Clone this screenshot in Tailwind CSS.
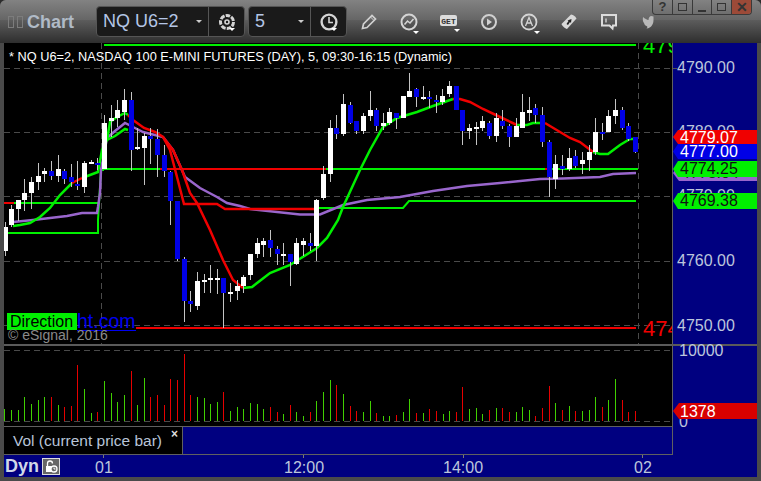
<!DOCTYPE html>
<html>
<head>
<meta charset="utf-8">
<script src="https://cdn.jsdelivr.net/npm/@tailwindcss/browser@4"></script>
</head>
<body class="m-0 bg-[#2c2c2c]">
<div class="w-[761px] h-[481px] flex flex-col overflow-hidden bg-[#4a4a4a] rounded-t-[6px] font-[Liberation_Sans,Arial,sans-serif]">

  <!-- toolbar -->
  <header class="relative h-[43px] shrink-0 flex items-center bg-[linear-gradient(180deg,#828282_0%,#666666_46%,#5c5c5c_47%,#2e2e2e_100%)]">
    <div class="flex gap-[3px] ml-[8px] w-[16px]">
      <span class="w-[6px] h-[12px] border border-[#7c7c7c] shrink-0"></span>
      <span class="w-[6px] h-[12px] border border-[#7c7c7c] shrink-0"></span>
    </div>
    <span class="ml-[3px] w-[69px] text-[18px] font-bold text-[#b0bac6] leading-none">Chart</span>

    <div class="w-[149px] h-[31px] flex rounded-[4px] border border-[#555] bg-[#1a1a1a]">
      <div class="w-[112px] flex items-center pl-[6px] border-r border-[#555] text-[18px] text-[#b4c6e6] relative">NQ U6=2<span class="absolute right-[6px] top-[13px] w-0 h-0 border-x-[3px] border-x-transparent border-t-[3px] border-t-[#ccc]"></span></div>
      <div class="flex-1 flex items-center justify-center relative">
        <svg width="20" height="20" viewBox="0 0 20 20" fill="none" stroke="#d4d4d4" stroke-width="3"><circle cx="10" cy="10" r="6.500" stroke-dasharray="4.500 1.200"/><circle cx="10" cy="10" r="2" stroke-width="1.600"/></svg>
        <span class="absolute left-[20px] bottom-[5px] w-0 h-0 border-x-[3px] border-x-transparent border-t-[3px] border-t-white"></span>
      </div>
    </div>
    <div class="ml-[3px] w-[99px] h-[31px] flex rounded-[4px] border border-[#555] bg-[#1a1a1a]">
      <div class="w-[62px] flex items-center pl-[6px] border-r border-[#555] text-[18px] text-[#b4c6e6] relative">5<span class="absolute right-[6px] top-[13px] w-0 h-0 border-x-[3px] border-x-transparent border-t-[3px] border-t-[#ccc]"></span></div>
      <div class="flex-1 flex items-center justify-center relative">
        <svg width="20" height="20" viewBox="0 0 20 20" fill="none" stroke="#d4d4d4" stroke-width="2.400"><circle cx="10" cy="10" r="7.400"/><path d="M10 5v5.500h4" stroke-width="1.600"/></svg>
        <span class="absolute left-[20px] bottom-[5px] w-0 h-0 border-x-[3px] border-x-transparent border-t-[3px] border-t-white"></span>
      </div>
    </div>

    <div class="ml-[2px] flex items-center">
      <div class="w-[40px] flex justify-center"><svg width="18" height="18" viewBox="0 0 18 18" fill="none" stroke="#d0d0d0" stroke-width="1.700"><path d="M2.500 15.500l1-4.500L12 2.500l3.500 3.500L7 14.500z"/><path d="M10.500 4l3.500 3.500" stroke-width="1"/></svg></div>
      <div class="w-[40px] flex justify-center relative"><svg width="20" height="20" viewBox="0 0 20 20" fill="none" stroke="#d4d4d4" stroke-width="2"><circle cx="10" cy="10" r="7.500"/><path d="M5.500 12.500l3-3.500 2.500 2 3.500-4" stroke-width="1.600"/></svg><span class="absolute left-[24px] bottom-[-2px] w-0 h-0 border-x-[3px] border-x-transparent border-t-[3px] border-t-white"></span></div>
      <div class="w-[40px] flex justify-center relative"><svg width="20" height="16" viewBox="0 0 20 16"><rect x="1" y="1" width="17" height="11" rx="2" fill="#dcdcdc"/><text x="9.500" y="9.500" text-anchor="middle" font-size="8" font-weight="700" fill="#333" font-family="Liberation Mono">GET</text></svg><span class="absolute left-[25px] bottom-[-2px] w-0 h-0 border-x-[3px] border-x-transparent border-t-[3px] border-t-white"></span></div>
      <div class="w-[40px] flex justify-center"><svg width="18" height="18" viewBox="0 0 18 18" fill="none" stroke="#d0d0d0" stroke-width="2"><circle cx="9" cy="9" r="7"/><path d="M7 5.500v7l5-3.500z" fill="#d0d0d0" stroke="none"/></svg></div>
      <div class="w-[40px] flex justify-center relative"><svg width="20" height="20" viewBox="0 0 20 20" fill="none" stroke="#d4d4d4" stroke-width="1.800"><circle cx="10" cy="10" r="7.500"/><path d="M6.500 14L10 5.500 13.500 14M8 11h4" stroke-width="1.300"/></svg><span class="absolute left-[25px] bottom-[-2px] w-0 h-0 border-x-[3px] border-x-transparent border-t-[3px] border-t-white"></span></div>
      <div class="w-[40px] flex justify-center"><svg width="18" height="18" viewBox="0 0 18 18"><path d="M1.500 11L11 1.500c1 0 4.500 1.500 5.500 4L7 16c-2-.5-5-3-5.500-5z" fill="#d8d8d8"/><path d="M6.500 11l2-3-1-.5 4-1.500-.5 4-1-1-2 3z" fill="#222"/></svg></div>
      <div class="w-[40px] flex justify-center"><svg width="18" height="18" viewBox="0 0 18 18" fill="none" stroke="#dcdcdc" stroke-width="2"><path d="M2 2h14v10.500h-3l-.5 3-3-3H2z"/><path d="M6 5.500v4" stroke-width="1.300"/></svg></div>
      <div class="w-[38px] flex justify-center"><svg width="12" height="14" viewBox="0 0 12 14"><path d="M1 2c2 1.800 4 2.800 5.500 3 0-2 1-4 3-4l2 .5V5c0 4-2 8-7 8.500C6 12 5.500 11.500 4.500 11 3 10.500 2.500 9.500 2 8c-1-1-1.500-3-1-6z" fill="#b8b8b8"/></svg></div>
    </div>

    <div class="absolute right-[9px] top-0 h-[15px] w-[100px] flex rounded-b-[4px] overflow-hidden border border-t-0 border-[#3a3a3a] text-[#333]">
      <div class="flex-1 flex items-center justify-center text-[13px] font-bold border-r border-[#3a3a3a]">?</div>
      <div class="flex-1 flex items-center justify-center border-r border-[#3a3a3a]"><span class="w-[9px] h-[8px] border border-[#333]"></span></div>
      <div class="flex-1 flex items-end justify-center pb-[2px] border-r border-[#3a3a3a]"><span class="w-[8px] h-[2px] bg-[#333]"></span></div>
      <div class="flex-1 flex items-center justify-center border-r border-[#3a3a3a]"><span class="w-[9px] h-[8px] border border-[#333]"></span></div>
      <div class="flex-1 flex items-center justify-center bg-[#9c4a38] text-[14px] font-bold leading-none">✕</div>
    </div>
  </header>

  <main class="mx-[4px] h-[434px] shrink-0 flex flex-col bg-[#000080] text-[16px] leading-none text-[#bcc6dc]">
    <!-- price pane -->
    <div class="flex h-[301px] shrink-0">
      <div class="relative w-[669px] shrink-0 bg-black border-r border-[#606060] overflow-hidden">
        <svg class="absolute left-0 top-0" width="668" height="301" viewBox="4 43 668 301" fill="none">
          <path d="M4 68.500H672M4 132.500H672M4 196.500H672M4 261.500H672M4 325.500H672" stroke="#4a4a4a" stroke-dasharray="6 4"/>
          <path d="M101.500 43V344M638.500 43V344" stroke="#4a4a4a" stroke-dasharray="6 4"/>
          <path d="M104 45H636" stroke="#00f000" stroke-width="2"/>
          <path d="M136 328H636" stroke="#f00000" stroke-width="2"/>
          <path d="M14 203H100M315 208H403L409 201H636M102 169H160M326 169H545M551 169H638" stroke="#00f000" stroke-width="2"/>
          <path d="M4 233H98V220L101 170H104" stroke="#00f000" stroke-width="2"/>
          <path d="M4 203H14M160 169H326M545 169H551" stroke="#f00000" stroke-width="2"/>
          <path d="M13 222L33 220 50 218 67 216 82 213H97L98 207 100 193 101 170 107 138 115 131 125 123 133 127 143 132 163 137 173 150 185 177 200 188 217 197 227 203 240 206 250 209 300 214.500H320L343 205 367 200 400 197 433 191 467 186 500 183 540 179 563 178.500 600 177 613 174 636 173" stroke="#9966cc" stroke-width="2.500"/>
          <path d="M13 226L20 225 30 223 40 217 50 208 60 195 72 183M82 178L98 172 102 150 107 140 115 136 125 129 128 130M107 140L110 122 117 117 125 113 128 115M243 288L252 287 270 273 290 265 317 248 327 238 338 220 343 207 360 170 370 150 383 127 397 118 417 112 433 106 453 99M517 125L527 125 533 123 545 123M593 152L600 154H608L620 145 630 139 636 139" stroke="#00f000" stroke-width="2.500"/>
          <path d="M72 183L82 178M128 115L133 120 144 128 155 132 163 137 170 150 177 177 184 204H217L225 209H315M163 137L173 150 182 170 190 193 197 203 210 230 223 260 233 280 243 288M453 99L460 99 470 102 483 109 500 117 517 125M545 123L570 138 580 142 593 152" stroke="#f00000" stroke-width="2.500"/>
          <g transform="translate(.5 0)" shape-rendering="crispEdges">
            <path stroke="#c4c4c4" d="M5 222V256M11 205V227M18 200V221M24 179V211M31 177V209M38 163V190M44 168V182M51 161V180M58 155V182M64 169V184M71 164V187M77 161V190M84 161V193M91 160V164M97 158V170M104 115V169M111 105V137M117 100V127M124 89V120M131 92V171M137 128V150M144 133V185M150 128V164M157 129V177M164 145V177M170 171V225M177 201V261M184 257V322M190 291V312M197 272V310M204 274V293M210 265V293M217 269V294M223 278V328M230 283V302M237 280V300M243 275V293M250 254V280M257 238V258M263 238V257M270 230V257M277 246V265M283 243V265M290 254V286M296 238V265M303 238V256M310 233V251M316 199V261M323 166V200M330 120V182M336 115V139M343 94V136M350 102V124M356 121V134M363 113V134M370 91V121M376 108V131M383 113V130M389 108V125M396 113V129M403 96V118M409 73V97M416 88V107M423 86V100M429 91V108M436 95V113M442 89V105M449 81V97M456 86V110M462 110V145M469 124V139M476 122V145M482 116V131M489 121V139M496 113V142M502 110V129M509 124V147M516 118V137M522 94V128M529 97V121M535 104V123M542 107V147M549 140V197M555 155V189M562 155V175M569 148V171M575 150V168M582 152V174M589 145V171M595 118V155M602 123V140M608 110V132M615 99V124M622 107V130M628 123V141M635 137V153"/>
            <path stroke="#fff" stroke-width="5" d="M5 227V251M11 209V225M18 200V209M24 193V200M31 182V193M38 176V182M44 171V174M58 169V176M84 163V187M91 162V164M104 123V169M111 118V121M117 110V118M124 100V112M137 147V149M144 136V148M197 281V306M204 280V282M210 278V280M217 278V280M230 292V294M237 286V291M243 277V286M250 254V275M257 243V254M263 241V245M283 254V256M296 243V264M303 241V245M316 200V246M323 174V198M330 128V174M343 104V134M363 116V131M370 110V116M383 123V126M389 112V123M403 96V118M409 91V97M423 97V99M442 96V102M449 86V94M469 128V131M476 127V129M482 121V128M496 118V136M516 126V137M522 112V128M529 110V113M555 164V179M569 158V169M582 160V164M589 152V160M595 132V152M608 116V132M615 110V116"/>
            <path stroke="#0000e6" stroke-width="5" d="M51 171V176M64 171V179M71 177V182M77 184V186M97 163V165M131 100V150M150 136V139M157 139V155M164 155V171M170 172V201M177 201V259M184 259V301M190 301V304M223 278V293M270 240V248M277 249V254M290 254V262M310 243V246M336 128V134M350 105V123M356 121V131M376 110V126M396 113V118M416 89V97M429 97V99M436 100V102M456 86V110M462 110V131M489 123V136M502 121V126M509 126V137M535 108V115M542 115V142M549 142V177M562 166V169M575 156V166M602 132V134M622 110V128M628 126V139M635 137V152"/>
          </g>
        </svg>
        <span class="absolute left-[5px] top-[7px] text-[12.750px] leading-[13px] text-white whitespace-nowrap">* NQ U6=2, NASDAQ 100 E-MINI FUTURES (DAY), 5, 09:30-16:15 (Dynamic)</span>
        <span class="absolute left-[639px] top-[-8px] text-[22px] text-[#00f000] whitespace-nowrap">479</span>
        <span class="absolute left-[639px] top-[275px] text-[22px] text-[#f00000] whitespace-nowrap">474</span>
        <div class="absolute left-[3px] top-[270px] flex items-center h-[17px] whitespace-nowrap">
          <span class="w-[70px] h-[17px] bg-[#00f000] text-black text-[16px] leading-[17px] pl-[3px]">Direction</span><span class="text-[19.500px] text-[#0000f0] border-b border-[#0000f0] leading-[17px]">ht.com</span>
        </div>
        <span class="absolute left-[4px] top-[285px] text-[14px] text-[#8a8a8a] whitespace-nowrap">© eSignal, 2016</span>
      </div>
      <div class="relative flex-1">
        <span class="absolute left-0 top-[25px] w-[4px] h-px bg-[#555]"></span>
        <span class="absolute left-[4px] top-[17px]">4790.00</span>
        <span class="absolute left-[4px] top-[81px]">4780.00</span>
        <span class="absolute left-[4px] top-[145px]">4770.00</span>
        <span class="absolute left-[4px] top-[210px]">4760.00</span>
        <span class="absolute left-[4px] top-[275px]">4750.00</span>
        <span class="absolute left-0 top-[122px] w-[84px] h-[16px] bg-[#9966cc] text-[#222] pl-[8px] leading-[16px] [clip-path:polygon(6px_0,100%_0,100%_100%,6px_100%,0_50%)]">4773.04</span>
        <span class="absolute left-0 top-[87px] w-[84px] h-[14px] bg-[#f00000] text-white pl-[7px] leading-[15px] [clip-path:polygon(5px_0,100%_0,100%_100%,5px_100%,0_50%)]">4779.07</span>
        <span class="absolute left-0 top-[101px] w-[84px] h-[15px] bg-[#0000e6] text-white pl-[7px] leading-[16px] [clip-path:polygon(5px_0,100%_0,100%_100%,5px_100%,0_50%)]">4777.00</span>
        <span class="absolute left-0 top-[118px] w-[84px] h-[16px] bg-[#00f000] text-[#111] pl-[7px] leading-[16px] [clip-path:polygon(5px_0,100%_0,100%_100%,5px_100%,0_50%)]">4774.25</span>
        <span class="absolute left-0 top-[150px] w-[84px] h-[16px] bg-[#00f000] text-[#111] pl-[7px] leading-[16px] [clip-path:polygon(5px_0,100%_0,100%_100%,5px_100%,0_50%)]">4769.38</span>
      </div>
    </div>

    <div class="h-[2px] shrink-0 bg-[#5a5a5a]"></div>

    <!-- volume pane -->
    <div class="flex h-[80px] shrink-0">
      <div class="w-[669px] shrink-0 bg-black border-r border-[#606060]">
        <svg width="668" height="80" viewBox="4 346 668 80" fill="none" class="block">
          <path d="M4 350.500H672M4 421.500H672" stroke="#4a4a4a" stroke-dasharray="6 4"/>
          <g shape-rendering="crispEdges">
            <path stroke="#40d000" d="M4.500 421v-12M11.500 421v-11M18.500 421v-11M24.500 421v-24M31.500 421v-17M38.500 421v-21M44.500 421v-24M58.500 421v-16M84.500 421v-32M91.500 421v-8M104.500 421v-40M111.500 421v-28M117.500 421v-19M124.500 421v-26M137.500 421v-16M144.500 421v-43M197.500 421v-24M204.500 421v-23M210.500 421v-17M217.500 421v-19M230.500 421v-10M237.500 421v-14M243.500 421v-12M250.500 421v-18M257.500 421v-17M263.500 421v-12M283.500 421v-7M296.500 421v-9M303.500 421v-5M316.500 421v-20M323.500 421v-29M330.500 421v-41M343.500 421v-27M363.500 421v-9M370.500 421v-20M383.500 421v-5M389.500 421v-5M403.500 421v-9M409.500 421v-22M423.500 421v-8M443.500 421v-7M449.500 421v-10M469.500 421v-12M476.500 421v-13M482.500 421v-7M496.500 421v-13M516.500 421v-9M522.500 421v-14M529.500 421v-11M555.500 421v-18M569.500 421v-15M582.500 421v-10M589.500 421v-11M595.500 421v-24M608.500 421v-21M615.500 421v-42"/>
            <path stroke="#e60000" d="M51.500 421v-24M64.500 421v-14M71.500 421v-15M77.500 421v-56M97.500 421v-9M131.500 421v-50M150.500 421v-24M157.500 421v-26M164.500 421v-16M170.500 421v-42M177.500 421v-41M184.500 421v-67M190.500 421v-26M223.500 421v-29M270.500 421v-14M277.500 421v-9M290.500 421v-16M310.500 421v-9M336.500 421v-36M350.500 421v-15M356.500 421v-10M376.500 421v-8M396.500 421v-6M416.500 421v-8M429.500 421v-12M436.500 421v-10M456.500 421v-9M462.500 421v-34M489.500 421v-11M502.500 421v-13M509.500 421v-9M535.500 421v-5M542.500 421v-13M549.500 421v-35M562.500 421v-11M575.500 421v-10M602.500 421v-14M622.500 421v-21M628.500 421v-9M635.500 421v-10"/>
          </g>
        </svg>
      </div>
      <div class="relative flex-1">
        <span class="absolute left-[6px] top-[-3px]">10000</span>
        <span class="absolute left-[6px] top-[68px]">0</span>
        <span class="absolute left-0 top-[57px] w-[84px] h-[16px] bg-[#d80000] text-white pl-[7px] leading-[17px] [clip-path:polygon(6px_0,100%_0,100%_100%,6px_100%,0_50%)]">1378</span>
      </div>
    </div>

    <div class="h-px w-[669px] shrink-0 bg-[#606060]"></div>

    <!-- study legend -->
    <div class="flex h-[27px] shrink-0 w-[669px] border-r border-[#606060]">
      <div class="relative w-[179px] bg-black border-r border-[#606060] flex items-center pl-[9px]">
        <span class="whitespace-nowrap text-[15.500px] text-[#b8c4d8]">Vol (current price bar)</span>
        <span class="absolute left-[167px] top-[1px] text-[12px] font-bold text-[#ddd]">×</span>
      </div>
    </div>

    <div class="h-px w-[669px] shrink-0 bg-[#606060]"></div>

    <!-- time axis -->
    <div class="relative h-[22px] shrink-0 flex items-center">
      <span class="ml-[1px] text-[18px] font-bold text-[#d0d8e8]">Dyn</span>
      <span class="ml-[3px] w-[18px] h-[17px] bg-[#666] border border-[#ddd] flex items-center justify-center">
        <svg width="13" height="13" viewBox="0 0 13 13" fill="none" stroke="#fff" stroke-width="1.300"><path d="M2.500 6V3.500a2.500 2.500 0 0 1 5 0"/><rect x="1" y="6" width="7" height="6" fill="#fff" stroke="none"/><circle cx="9" cy="9" r="3" fill="#666"/><path d="M9 7.500V9h1.500" stroke-width="1"/></svg>
      </span>
      <span class="absolute left-[99px] top-0 w-px h-[3px] bg-[#777]"></span>
      <span class="absolute left-[299px] top-0 w-px h-[3px] bg-[#777]"></span>
      <span class="absolute left-[459px] top-0 w-px h-[3px] bg-[#777]"></span>
      <span class="absolute left-[638px] top-0 w-px h-[3px] bg-[#777]"></span>
      <span class="absolute left-[91px] top-[5px]">01</span>
      <span class="absolute left-[280px] top-[5px]">12:00</span>
      <span class="absolute left-[439px] top-[5px]">14:00</span>
      <span class="absolute left-[630px] top-[5px]">02</span>
    </div>
  </main>
</div>
</body>
</html>
